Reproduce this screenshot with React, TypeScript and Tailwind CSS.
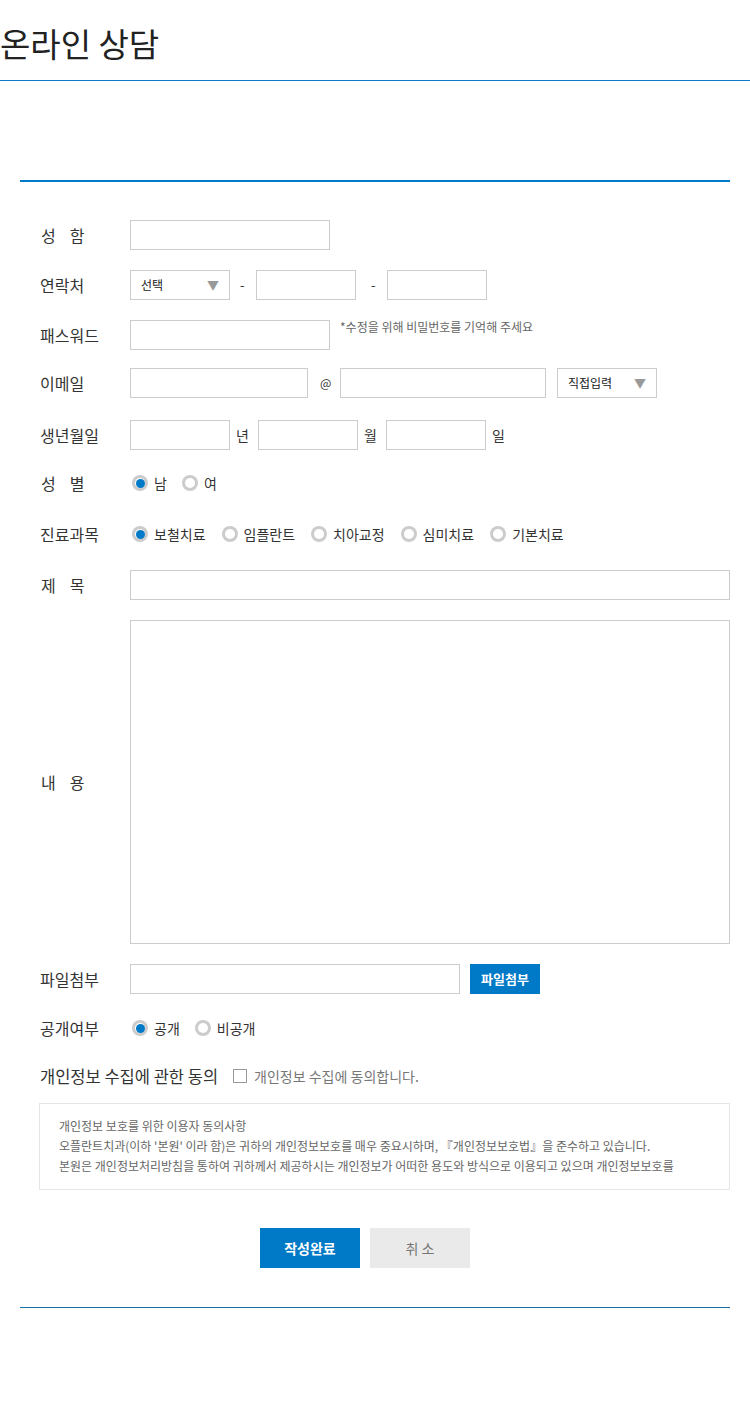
import React, { useState } from 'react'

const font = { fontFamily: '"Noto Sans CJK KR", "Noto Sans", sans-serif' }

const inputCls = "h-[30px] border border-[#cccccc] bg-white outline-none px-2 text-[13px] text-[#333]"

const Label = ({ chars }: { chars: string[] }) => (
    <div className="w-[90px] shrink-0 flex items-center text-[16px] text-[#333]">
        {chars.length === 2 ? (
            <div className="flex gap-[14px] pl-px">
                <span>{chars[0]}</span>
                <span>{chars[1]}</span>
            </div>
        ) : (
            <span>{chars.join("")}</span>
        )}
    </div>
)

const SelectBox = ({ text, width }: { text: string; width: string }) => (
    <div className={`${width} h-[30px] border border-[#cccccc] flex items-center justify-between pl-[10px] pr-[10px] text-[12px] text-[#222]`}>
        <span>{text}</span>
        <span className="text-[#999] text-[12px]">▼</span>
    </div>
)

const Radio = ({ checked, label, onClick }: { checked: boolean; label: string; onClick: () => void }) => (
    <button type="button" onClick={onClick} className="flex items-center gap-[6px] text-[14px] text-[#333]">
        <span className="w-[16px] h-[16px] rounded-full bg-[#cccccc] flex items-center justify-center">
            <span className="w-[10px] h-[10px] rounded-full bg-white flex items-center justify-center">
                {checked && <span className="w-[9px] h-[9px] rounded-full bg-[#0079c6]" />}
            </span>
        </span>
        <span>{label}</span>
    </button>
)

const Row = ({ children, className = "" }: { children: React.ReactNode; className?: string }) => (
    <div className={`flex items-center pl-[20px] ${className}`}>{children}</div>
)

export default function App() {
    const [gender, setGender] = useState("남")
    const [subject, setSubject] = useState("보철치료")
    const [open, setOpen] = useState("공개")
    const [agree, setAgree] = useState(false)

    const subjects = ["보철치료", "임플란트", "치아교정", "심미치료", "기본치료"]

    return (
        <div className="w-[750px] bg-white pb-[105px]" style={font}>
            {/* title */}
            <div className="h-[81px] border-b border-[#0b7bc4] flex items-center">
                <h1 className="text-[33px] text-[#222] leading-none mt-[7px]">온라인 상담</h1>
            </div>

            <div className="px-[20px]">
                <div className="mt-[99px] border-t-2 border-[#0079c6]" />

                <div className="flex flex-col gap-[20px] pt-[38px]">
                    <Row>
                        <Label chars={["성", "함"]} />
                        <input className={`${inputCls} w-[200px]`} />
                    </Row>

                    <Row>
                        <Label chars={["연락처"]} />
                        <SelectBox text="선택" width="w-[100px]" />
                        <span className="mx-[10px] text-[13px] text-[#333] w-[6px]">-</span>
                        <input className={`${inputCls} w-[100px]`} />
                        <span className="ml-[15px] mr-[10px] text-[13px] text-[#333] w-[6px]">-</span>
                        <input className={`${inputCls} w-[100px]`} />
                    </Row>

                    <Row className="!items-start">
                        <div className="h-[30px] flex items-center">
                            <Label chars={["패스워드"]} />
                        </div>
                        <input type="password" className={`${inputCls} w-[200px]`} />
                        <span className="ml-[10px] text-[12px] text-[#666] leading-none mt-[1px]">
                            *수정을 위해 비밀번호를 기억해 주세요
                        </span>
                    </Row>

                    <Row className="-mt-[2px]">
                        <Label chars={["이메일"]} />
                        <input className={`${inputCls} w-[178px]`} />
                        <span className="mx-[12px] text-[12px] text-[#333] w-[8px]">@</span>
                        <input className={`${inputCls} w-[206px]`} />
                        <div className="ml-[11px]">
                            <SelectBox text="직접입력" width="w-[100px]" />
                        </div>
                    </Row>

                    <Row className="mt-[2px]">
                        <Label chars={["생년월일"]} />
                        <input className={`${inputCls} w-[100px]`} />
                        <span className="ml-[6px] w-[22px] text-[14px] text-[#333]">년</span>
                        <input className={`${inputCls} w-[100px]`} />
                        <span className="ml-[6px] w-[22px] text-[14px] text-[#333]">월</span>
                        <input className={`${inputCls} w-[100px]`} />
                        <span className="ml-[6px] text-[14px] text-[#333]">일</span>
                    </Row>

                    <Row className="h-[30px] -mt-[2px]">
                        <Label chars={["성", "별"]} />
                        <div className="flex items-center gap-[15px] pl-[2px]">
                            {["남", "여"].map((g) => (
                                <Radio key={g} label={g} checked={gender === g} onClick={() => setGender(g)} />
                            ))}
                        </div>
                    </Row>

                    <Row className="h-[30px] mt-[1px]">
                        <Label chars={["진료과목"]} />
                        <div className="flex items-center gap-[16px] pl-[2px]">
                            {subjects.map((s) => (
                                <Radio key={s} label={s} checked={subject === s} onClick={() => setSubject(s)} />
                            ))}
                        </div>
                    </Row>

                    <Row className="mt-[1px]">
                        <Label chars={["제", "목"]} />
                        <input className={`${inputCls} w-[600px]`} />
                    </Row>

                    <Row>
                        <Label chars={["내", "용"]} />
                        <textarea className="w-[600px] h-[324px] border border-[#cccccc] outline-none resize-none p-2 text-[13px]" />
                    </Row>

                    <Row>
                        <Label chars={["파일첨부"]} />
                        <input className={`${inputCls} w-[330px]`} />
                        <button type="button" className="ml-[10px] w-[70px] h-[30px] bg-[#0079c6] text-white text-[13px] font-bold">
                            파일첨부
                        </button>
                    </Row>

                    <Row className="h-[30px] -mt-[1px]">
                        <Label chars={["공개여부"]} />
                        <div className="flex items-center gap-[15px] pl-[2px]">
                            {["공개", "비공개"].map((o) => (
                                <Radio key={o} label={o} checked={open === o} onClick={() => setOpen(o)} />
                            ))}
                        </div>
                    </Row>

                    <Row className="h-[30px] -mt-[2px]">
                        <span className="text-[16.5px] text-[#333]">개인정보 수집에 관한 동의</span>
                        <label className="ml-[15px] flex items-center gap-[7px] text-[14px] text-[#777] cursor-pointer">
                            <input
                                type="checkbox"
                                checked={agree}
                                onChange={() => setAgree(!agree)}
                                className="appearance-none w-[14px] h-[14px] border border-[#999] bg-white checked:bg-[#0079c6]"
                            />
                            개인정보 수집에 동의합니다.
                        </label>
                    </Row>
                </div>

                {/* terms */}
                <div className="ml-[19px] mt-[12px] h-[87px] border border-[#e5e5e5] pl-[19px] pt-[12px] text-[12px] leading-[20px] text-[#666] overflow-hidden">
                    <p>개인정보 보호를 위한 이용자 동의사항</p>
                    <p>오플란트치과(이하 '본원' 이라 함)은 귀하의 개인정보보호를 매우 중요시하며, 『개인정보보호법』을 준수하고 있습니다.</p>
                    <p>본원은 개인정보처리방침을 통하여 귀하께서 제공하시는 개인정보가 어떠한 용도와 방식으로 이용되고 있으며 개인정보보호를</p>
                </div>

                <div className="flex justify-center gap-[10px] mt-[38px] mr-[20px]">
                    <button type="button" className="w-[100px] h-[40px] bg-[#0079c6] text-white text-[14px] font-bold">
                        작성완료
                    </button>
                    <button type="button" className="w-[100px] h-[40px] bg-[#eaeaea] text-[#777] text-[14px]">
                        취 소
                    </button>
                </div>

                <div className="mt-[39px] border-t border-[#1a6ea8]" />
            </div>
        </div>
    )
}
